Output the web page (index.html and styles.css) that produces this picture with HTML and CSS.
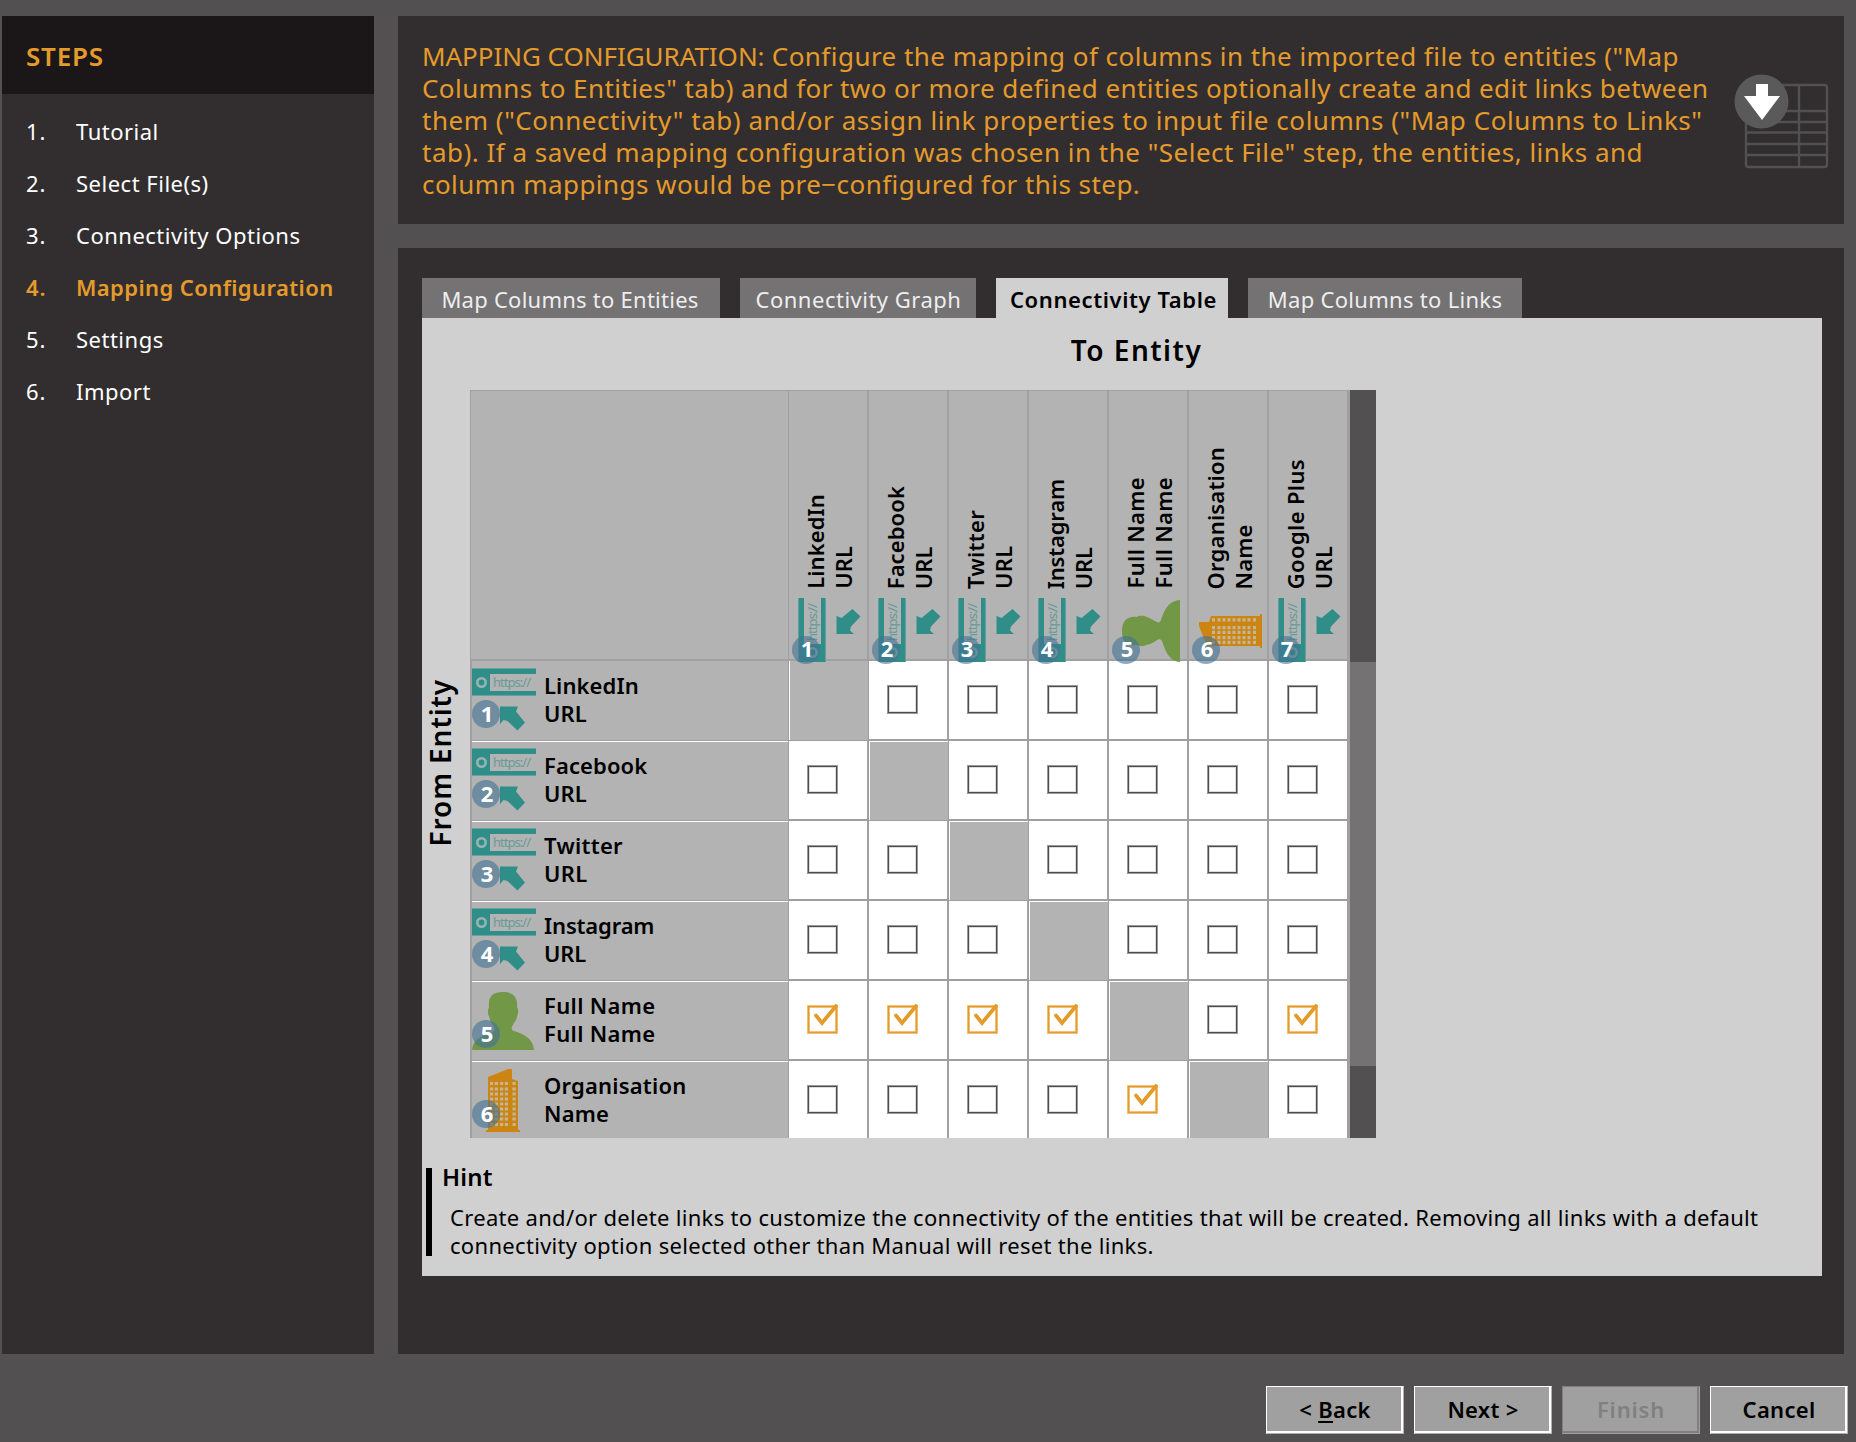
FILE: index.html
```
<!DOCTYPE html>
<html lang="en">
<head>
<meta charset="utf-8">
<title>Mapping Configuration</title>
<link rel="stylesheet" href="styles.css">
</head>
<body>
<svg class="defs" aria-hidden="true">
  <symbol id="url" viewBox="0 0 64 64" overflow="visible">
    <path fill="#65a09c" d="M0 0h64v28H0z"/>
    <path fill="#308e88" d="M0 1h64v26H0z"/>
    <path fill="#b3b3b3" d="M18 6h46v17H18z"/>
    <circle cx="9.5" cy="14.5" r="4.2" fill="none" stroke="#9ab3b0" stroke-width="2.6"/>
    <text class="https" x="21" y="18.5" textLength="38">https://</text>
    <path fill="#308e88" d="M28 38.500h18l-2 5 9 11-7.500 8-10-9.500-4-1-3.500 4z"/>
  </symbol>
  <symbol id="person" viewBox="0 0 64 64" overflow="visible">
    <path fill="#729746" d="M0 62C1 53 6 49 21 44C24 42 23 40 20 36C18 33 18 31 17 28C15 25 16 22 17 19C16 8 21 4 31 4S46 9 45 19C47 22 46 26 45 29C44 33 42 34 41 37C39 40 39 42 42 43C55 47 61 52 62 62z"/>
  </symbol>
  <symbol id="tower" viewBox="0 0 64 64" overflow="visible">
    <path fill="#cc8513" d="M16 9L36 1h4v10l6 2v49h2v2H14v-2h2z"/>
    <path stroke="#c4b596" stroke-width="3" stroke-dasharray="3.200 1.600" d="M18 15.500h8M28 15.500h8M40.500 15.500h4M18 21h8M28 21h8M40.500 21h4M18 26h8M28 26h8M40.500 26h4M18 31h8M28 31h8M40.500 31h4M18 36h8M28 36h8M40.500 36h4M18 41h8M28 41h8M40.500 41h4M18 46h8M28 46h8M40.500 46h4M18 51h8M28 51h8M40.500 51h4M18 56.500h8M28 56.500h8M40.500 56.500h4"/>
  </symbol>
  <symbol id="tick" viewBox="0 0 32 32" overflow="visible">
    <path fill="none" stroke="#f3cd93" stroke-width="3" d="M1.500 2.500h28v26h-28z"/>
    <path fill="none" stroke="#e59b2c" stroke-width="1.600" d="M1.500 2.500h28v26h-28z"/>
    <path fill="none" stroke="#e59b2c" stroke-width="3.800" stroke-linecap="round" d="M9 11.500l6 7.500L29 2"/>
  </symbol>
</svg>

<div class="wizard">
  <aside class="steps">
    <h2>STEPS</h2>
    <ol>
      <li><b>1.</b>Tutorial</li>
      <li><b>2.</b>Select File(s)</li>
      <li><b>3.</b>Connectivity Options</li>
      <li class="current"><b>4.</b>Mapping Configuration</li>
      <li><b>5.</b>Settings</li>
      <li><b>6.</b>Import</li>
    </ol>
  </aside>

  <main class="main">
    <header class="intro">
      <p>
        <span class="l1"><em>MAPPING CONFIGURATION:</em> Configure the mapping of columns in the imported file to entities ("Map</span>
        <span class="l2">Columns to Entities" tab) and for two or more defined entities optionally create and edit links between</span>
        <span class="l3">them ("Connectivity" tab) and/or assign link properties to input file columns ("Map Columns to Links"</span>
        <span class="l4">tab). If a saved mapping configuration was chosen in the "Select File" step, the entities, links and</span>
        <span class="l5">column mappings would be pre−configured for this step.</span>
      </p>
      <svg width="96" height="96" viewBox="0 0 96 96">
        <g fill="none" stroke="#525152" stroke-width="2.400"><rect x="12" y="11" width="81" height="82" rx="2.500"/><path d="M65 11v82M12 37h81M12 48h81M12 58.500h81M12 70h81M12 81h81"/></g>
        <circle cx="27.500" cy="27.500" r="27" fill="#5a5a5a"/>
        <path fill="#fff" d="M22 10h12v12h12L28 46 10 22h12z"/>
      </svg>
    </header>

    <section class="config">
      <nav class="tabs">
        <a class="t1">Map Columns to Entities</a>
        <a class="t2">Connectivity Graph</a>
        <a class="t3 active">Connectivity Table</a>
        <a class="t4">Map Columns to Links</a>
      </nav>
      <div class="panel">
        <h3 class="to">To Entity</h3>
        <div class="matrix">
          <h3 class="from"><span>From Entity</span></h3>
          <div class="grid">
            <div class="corner"></div>
            <div class="col"><p class="linkedin"><span>LinkedIn</span><br><span>URL</span></p><svg viewBox="0 0 80 64"><use href="#url" width="64" height="64" transform="translate(9 64) rotate(-90)"/><circle class="badge" cx="17" cy="52" r="14"/><text x="18" y="59">1</text></svg></div>
            <div class="col"><p class="facebook"><span>Facebook</span><br><span>URL</span></p><svg viewBox="0 0 80 64"><use href="#url" width="64" height="64" transform="translate(9 64) rotate(-90)"/><circle class="badge" cx="17" cy="52" r="14"/><text x="18" y="59">2</text></svg></div>
            <div class="col"><p class="twitter"><span>Twitter</span><br><span>URL</span></p><svg viewBox="0 0 80 64"><use href="#url" width="64" height="64" transform="translate(9 64) rotate(-90)"/><circle class="badge" cx="17" cy="52" r="14"/><text x="18" y="59">3</text></svg></div>
            <div class="col"><p class="instagram"><span>Instagram</span><br><span>URL</span></p><svg viewBox="0 0 80 64"><use href="#url" width="64" height="64" transform="translate(9 64) rotate(-90)"/><circle class="badge" cx="17" cy="52" r="14"/><text x="18" y="59">4</text></svg></div>
            <div class="col"><p class="fullname"><span>Full Name</span><br><span>Full Name</span></p><svg viewBox="0 0 80 64"><use href="#person" width="64" height="64" transform="translate(9 64) rotate(-90)"/><circle class="badge" cx="17" cy="52" r="14"/><text x="18" y="59">5</text></svg></div>
            <div class="col"><p class="organisation"><span>Organisation</span><br><span>Name</span></p><svg viewBox="0 0 80 64"><use href="#tower" width="64" height="64" transform="translate(9 64) rotate(-90)"/><circle class="badge" cx="17" cy="52" r="14"/><text x="18" y="59">6</text></svg></div>
            <div class="col"><p class="google"><span>Google Plus</span><br><span>URL</span></p><svg viewBox="0 0 80 64"><use href="#url" width="64" height="64" transform="translate(9 64) rotate(-90)"/><circle class="badge" cx="17" cy="52" r="14"/><text x="18" y="59">7</text></svg></div>

            <div class="row"><svg viewBox="0 0 64 64"><use href="#url" width="64" height="64"/><circle class="badge" cx="14" cy="46" r="14"/><text x="15" y="54">1</text></svg><p class="linkedin"><span>LinkedIn</span><br><span>URL</span></p></div>
            <div class="self"></div><div class="cell"><i></i></div><div class="cell"><i></i></div><div class="cell"><i></i></div><div class="cell"><i></i></div><div class="cell"><i></i></div><div class="cell"><i></i></div>

            <div class="row"><svg viewBox="0 0 64 64"><use href="#url" width="64" height="64"/><circle class="badge" cx="14" cy="46" r="14"/><text x="15" y="54">2</text></svg><p class="facebook"><span>Facebook</span><br><span>URL</span></p></div>
            <div class="cell"><i></i></div><div class="self"></div><div class="cell"><i></i></div><div class="cell"><i></i></div><div class="cell"><i></i></div><div class="cell"><i></i></div><div class="cell"><i></i></div>

            <div class="row"><svg viewBox="0 0 64 64"><use href="#url" width="64" height="64"/><circle class="badge" cx="14" cy="46" r="14"/><text x="15" y="54">3</text></svg><p class="twitter"><span>Twitter</span><br><span>URL</span></p></div>
            <div class="cell"><i></i></div><div class="cell"><i></i></div><div class="self"></div><div class="cell"><i></i></div><div class="cell"><i></i></div><div class="cell"><i></i></div><div class="cell"><i></i></div>

            <div class="row"><svg viewBox="0 0 64 64"><use href="#url" width="64" height="64"/><circle class="badge" cx="14" cy="46" r="14"/><text x="15" y="54">4</text></svg><p class="instagram"><span>Instagram</span><br><span>URL</span></p></div>
            <div class="cell"><i></i></div><div class="cell"><i></i></div><div class="cell"><i></i></div><div class="self"></div><div class="cell"><i></i></div><div class="cell"><i></i></div><div class="cell"><i></i></div>

            <div class="row"><svg viewBox="0 0 64 64"><use href="#person" width="64" height="64"/><circle class="badge" cx="14" cy="46" r="14"/><text x="15" y="54">5</text></svg><p class="fullname"><span>Full Name</span><br><span>Full Name</span></p></div>
            <div class="cell"><svg class="tick"><use href="#tick"/></svg></div><div class="cell"><svg class="tick"><use href="#tick"/></svg></div><div class="cell"><svg class="tick"><use href="#tick"/></svg></div><div class="cell"><svg class="tick"><use href="#tick"/></svg></div><div class="self"></div><div class="cell"><i></i></div><div class="cell"><svg class="tick"><use href="#tick"/></svg></div>

            <div class="row"><svg viewBox="0 0 64 64"><use href="#tower" width="64" height="64"/><circle class="badge" cx="14" cy="46" r="14"/><text x="15" y="54">6</text></svg><p class="organisation"><span>Organisation</span><br><span>Name</span></p></div>
            <div class="cell"><i></i></div><div class="cell"><i></i></div><div class="cell"><i></i></div><div class="cell"><i></i></div><div class="cell"><svg class="tick"><use href="#tick"/></svg></div><div class="self"></div><div class="cell"><i></i></div>
          </div>
          <div class="scroll"><div class="thumb"></div></div>
        </div>
        <div class="hint">
          <div class="bar"></div>
          <div>
            <h4>Hint</h4>
            <p>Create and/or delete links to customize the connectivity of the entities that will be created. Removing all links with a default<br>connectivity option selected other than Manual will reset the links.</p>
          </div>
        </div>
      </div>
    </section>
  </main>
</div>

<footer class="actions">
  <button><span>&lt; <u>B</u>ack</span></button>
  <button><span>Next &gt;</span></button>
  <button class="off"><span>Finish</span></button>
  <button><span>Cancel</span></button>
</footer>
</body>
</html>
```
FILE: styles.css
```
* { box-sizing: border-box; margin: 0; padding: 0; }
body {
  width: 1856px; height: 1442px; overflow: hidden;
  background: #525051; color: #000;
  font: 22px/28px "Noto Sans", sans-serif;
  padding-top: 16px;
}
svg { display: block; flex: none; }
.defs { display: none; }

.wizard { display: flex; gap: 24px; height: 1338px; padding: 0 12px 0 2px; }

.steps { width: 372px; background: #322e2f; color: #fff; }
.steps h2 {
  height: 78px; padding: 1px 0 0 24px; background: #1b1718; color: #e59b2c;
  font-size: 26px; line-height: 78px; font-weight: 650; letter-spacing: .8px;
}
.steps ol { list-style: none; padding-top: 11px; }
.steps li { display: flex; line-height: 52px; padding-left: 24px; letter-spacing: .5px; }
.steps b { width: 50px; font-weight: inherit; letter-spacing: 1px; }
.steps .current { color: #e59b2c; font-weight: 650; letter-spacing: .4px; }

.main { flex: 1; display: flex; flex-direction: column; gap: 24px; }
.intro {
  height: 208px; background: #322e2f; color: #e59b2c;
  display: flex; justify-content: space-between; padding: 24px 14px 0 24px;
}
.intro p { font-size: 26px; line-height: 32px; white-space: nowrap; }
.intro span { display: block; }
.intro em { font-style: normal; letter-spacing: -.04px; }
.intro svg { margin-top: 34px; }
.l1 { letter-spacing: .46px; }
.l2 { letter-spacing: .42px; }
.l3 { letter-spacing: .53px; }
.l4 { letter-spacing: .49px; }
.l5 { letter-spacing: .44px; }

.config { flex: 1; background: #322e2f; padding: 30px 22px 0 24px; }
.tabs { display: flex; height: 40px; }
.tabs a {
  height: 40px; padding-top: 1px; line-height: 40px; text-align: center;
  white-space: nowrap; background: #747273; color: #eee; letter-spacing: .4px;
}
.tabs .t1 { width: 298px; margin-right: 20px; padding-right: 2px; letter-spacing: .25px; }
.tabs .t2 { width: 236px; margin-right: 20px; padding-left: 1px; letter-spacing: .5px; }
.tabs .t3 { width: 232px; margin-right: 20px; padding-left: 3px; letter-spacing: .6px; }
.tabs .t4 { width: 274px; letter-spacing: .3px; }
.tabs .active { background: #d0d0d0; color: #000; font-weight: 650; }

.panel { height: 958px; background: #d0d0d0; }
.to, .from { font-size: 28px; font-weight: 650; }
.to { height: 72px; padding-left: 29px; line-height: 64px; text-align: center; letter-spacing: 1.5px; }
.matrix { display: flex; height: 748px; }
.from { width: 48px; display: flex; align-items: center; justify-content: center; letter-spacing: .9px; }
.from span { writing-mode: vertical-rl; transform: rotate(180deg); line-height: 36px; margin: 0 13px 2px 0; white-space: nowrap; }

.grid {
  display: grid; grid-template-columns: 319px repeat(7, 80px); grid-template-rows: 271px repeat(6, 80px);
  width: 880px; height: 748px; overflow: hidden; border-right: 1px solid #a0a0a0;
}
.corner, .col { background: #b3b3b3; border: solid #a0a0a0; border-width: 1px 2px 2px 0; }
.corner { border-width: 1px 1px 2px 1px; }
.col { display: flex; flex-direction: column; justify-content: flex-end; }
.col p { writing-mode: vertical-rl; transform: rotate(180deg); margin: 0 0 9px 12px; width: 56px; white-space: nowrap; font-weight: 650; }
.col svg { width: 80px; height: 64px; margin: 0 -2px -3px 0; overflow: visible; position: relative; }
.badge { fill: rgba(66, 114, 149, .6); }
.grid text { fill: #fff; font-size: 22px; font-weight: 700; text-anchor: middle; }
.grid .https, .https { fill: #308e88; font-size: 13px; font-weight: 400; text-anchor: start; opacity: .6; }

.row { display: flex; background: #b3b3b3; border: solid #a0a0a0; border-width: 0 1px 1px 2px; }
.cell + .row { box-shadow: inset 0 1px #fff; }
.row svg { width: 64px; height: 64px; margin-top: 7px; }
.row p { padding: 10px 0 0 8px; font-weight: 650; white-space: nowrap; }
.linkedin, .facebook { letter-spacing: .1px; }
.twitter { letter-spacing: .3px; }
.instagram { letter-spacing: -.15px; }
.fullname, .google { letter-spacing: .35px; }
.organisation { letter-spacing: .2px; }

.cell { background: #fff; border: solid #a0a0a0; border-width: 0 2px 2px 0; padding: 24px 0 0 18px; }
.cell i { display: block; width: 31px; height: 29px; border: 1px solid #999; background: #fff; box-shadow: inset 0 0 0 1px #4c4c4c, inset 0 0 0 2px #ddd; }
.cell .tick { width: 32px; height: 32px; margin-top: -1px; overflow: visible; }
.self { background: #b3b3b3; border: solid #a0a0a0; border-width: 0 1px 1px 0; box-shadow: inset 1px 1px #fff; }
.row:nth-child(9) + .self { box-shadow: inset 1px 0 #fff; }

.scroll { width: 26px; background: #525051; padding-top: 272px; }
.thumb { height: 404px; background: #747273; }

.hint { display: flex; padding: 25px 0 0 4px; }
.bar { width: 6px; height: 88px; margin-top: 5px; background: #000; }
.hint h4 { margin-left: 10px; font-size: 24px; font-weight: 650; letter-spacing: .2px; }
.hint p { margin: 12px 0 0 18px; letter-spacing: .31px; white-space: nowrap; }

.actions { display: flex; justify-content: flex-end; gap: 10px; padding: 32px 8px 0 0; }
.actions button {
  width: 138px; height: 48px; background: #a0a0a0; color: #000; padding-bottom: 2px;
  font: 650 22px/28px "Noto Sans", sans-serif; letter-spacing: .3px;
  border: solid; border-width: 1px; border-color: #fff #b0b0b0 #b0b0b0 #fff; box-shadow: inset -2px -2px #fff;
}
.actions span { display: block; }
.actions u { text-decoration-thickness: 2px; text-underline-offset: 3px; }
.actions .off { color: #808080; border-color: #808080 #a0a0a0 #a0a0a0 #808080; box-shadow: inset -2px -2px #808080; letter-spacing: .8px; }
```
